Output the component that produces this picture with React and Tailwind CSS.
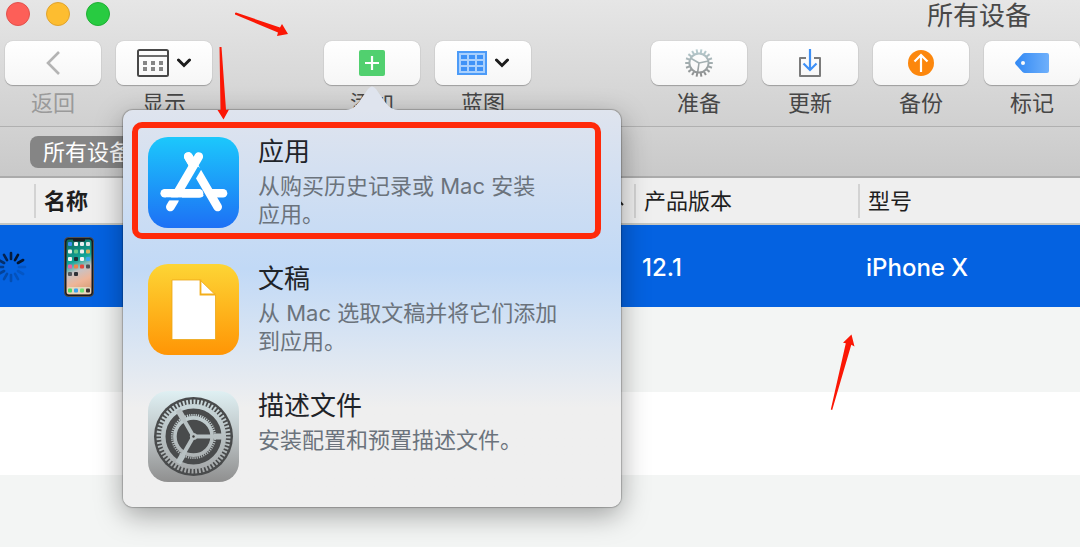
import clsx from 'clsx'

const RED = '#fb1705'

function range(n) {
  return Array.from({ length: n }, (_, i) => i)
}

function Chevron() {
  return (
    <svg width="14" height="10" viewBox="0 0 14 10" fill="none" stroke="#1c1c1c" strokeWidth="3">
      <path d="M1.5 2 L7 7.5 L12.5 2" strokeLinecap="round" />
    </svg>
  )
}

function BackIcon() {
  return (
    <svg width="16" height="24" viewBox="0 0 16 24" fill="none" stroke="#b4b4b4" strokeWidth="2.6">
      <path d="M14 1 L3 12 L14 23" />
    </svg>
  )
}

function CalendarIcon() {
  return (
    <svg width="32" height="28" viewBox="0 0 32 28">
      <rect x="1" y="1" width="30" height="26" rx="1.5" fill="none" stroke="#484848" strokeWidth="2" />
      <path d="M1 7 H31" stroke="#484848" strokeWidth="1.6" />
      {[6, 14, 22].map((x) => (
        <g key={x} fill="#858585">
          <rect x={x} y="12" width="4" height="4" />
          <rect x={x} y="18" width="4" height="4" />
        </g>
      ))}
    </svg>
  )
}

function AddIcon() {
  return (
    <svg width="26" height="26" viewBox="0 0 26 26">
      <rect width="26" height="26" rx="2" fill="#51d06f" />
      <path d="M13 6 V20 M6 13 H20" stroke="#fff" strokeWidth="2.2" />
    </svg>
  )
}

function BlueprintIcon() {
  return (
    <svg width="30" height="24" viewBox="0 0 30 24">
      <rect x="1" y="1" width="28" height="22" fill="#a9d0fd" stroke="#4c9bf8" strokeWidth="2" />
      {[4, 12, 20].map((x) =>
        [4, 10, 16].map((y) => (
          <rect key={`${x}-${y}`} x={x} y={y} width="6" height="4" fill="#3f92f7" />
        )),
      )}
    </svg>
  )
}

function PrepareIcon() {
  return (
    <svg width="28" height="28" viewBox="0 0 28 28" fill="none">
      <defs>
        <linearGradient id="prepare" gradientUnits="userSpaceOnUse" x1="0" y1="0" x2="0" y2="28">
          <stop offset="0" stopColor="#b9cfd3" />
          <stop offset="1" stopColor="#8b8b8b" />
        </linearGradient>
      </defs>
      <g stroke="url(#prepare)">
        <circle cx="14" cy="14" r="9.6" strokeWidth="2" />
        <path d="M14 14 L5.8 9.2 M14 14 L23.4 12 M14 14 L12.6 23.6" strokeWidth="1.6" />
        {range(18).map((i) => {
          const a = (i * Math.PI) / 9
          return (
            <line
              key={i}
              x1={14 + 10 * Math.cos(a)}
              y1={14 + 10 * Math.sin(a)}
              x2={14 + 13.8 * Math.cos(a)}
              y2={14 + 13.8 * Math.sin(a)}
              strokeWidth="2"
            />
          )
        })}
      </g>
    </svg>
  )
}

function UpdateIcon() {
  return (
    <svg width="24" height="28" viewBox="0 0 24 28" fill="none">
      <path d="M8 9 H2 V27 H22 V9 H16" stroke="#7b7b7b" strokeWidth="2" strokeLinejoin="round" />
      <path d="M12 0 V20 M5.5 14.5 L12 21 L18.5 14.5" stroke="#3d8ff5" strokeWidth="2.2" />
    </svg>
  )
}

function BackupIcon() {
  return (
    <svg width="26" height="26" viewBox="0 0 26 26" fill="none">
      <circle cx="13" cy="13" r="13" fill="#fc870d" />
      <path d="M13 22 V5 M6.5 11.5 L13 5 L19.5 11.5" stroke="#fff" strokeWidth="2.2" />
    </svg>
  )
}

function TagIcon() {
  return (
    <svg width="34" height="20" viewBox="0 0 34 20">
      <defs>
        <linearGradient id="tag">
          <stop offset="0" stopColor="#3289f4" />
          <stop offset="1" stopColor="#6fb0fb" />
        </linearGradient>
      </defs>
      <path
        fill="url(#tag)"
        fillRule="evenodd"
        d="M10 0 H32 Q34 0 34 2 V18 Q34 20 32 20 H10 Q8.5 20 7.5 19 L0.5 11.2 Q-0.3 10 0.5 8.8 L7.5 1 Q8.5 0 10 0 Z M8 8 A2 2 0 1 0 8 12 A2 2 0 1 0 8 8 Z"
      />
    </svg>
  )
}

function AppStoreIcon() {
  return (
    <svg className="shrink-0" width="91" height="91" viewBox="0 0 91 91" fill="none">
      <defs>
        <linearGradient id="store" gradientUnits="userSpaceOnUse" x1="0" y1="0" x2="0" y2="91">
          <stop offset="0" stopColor="#1cc8fc" />
          <stop offset="1" stopColor="#1d70f5" />
        </linearGradient>
      </defs>
      <rect width="91" height="91" rx="20" fill="url(#store)" />
      <g stroke="#fff" strokeWidth="8.6" strokeLinecap="round">
        <path d="M16.7 56.3 H52" />
        <path d="M46 30 L69.7 70.5" stroke="url(#store)" strokeWidth="12" />
        <path d="M40.3 19.5 L69.7 70" />
        <path d="M63 56.3 H75" />
        <path d="M49 29 L36 51" stroke="url(#store)" strokeWidth="11" strokeLinecap="butt" />
        <path d="M40.3 19.5 L44.5 26.5" />
        <path d="M50.8 19.5 L30 55" />
        <path d="M30 56.3 H51" />
        <path d="M26.5 63 L22.3 70" />
      </g>
      <path d="M18 62 H34" stroke="url(#store)" strokeWidth="2.8" />
    </svg>
  )
}

function DocumentIcon() {
  return (
    <svg className="shrink-0" width="91" height="91" viewBox="0 0 91 91">
      <defs>
        <linearGradient id="doc" x1="0" y1="0" x2="0" y2="1">
          <stop offset="0" stopColor="#fdd535" />
          <stop offset="1" stopColor="#ff9505" />
        </linearGradient>
      </defs>
      <rect width="91" height="91" rx="20" fill="url(#doc)" />
      <path d="M24 16 H52 L67.5 31 V75.5 H24 Z" fill="#fff" stroke="#eba617" strokeWidth="0.8" />
      <path d="M52.5 15.5 V30.5 H67.5" fill="none" stroke="#f3ae1b" strokeWidth="1.8" />
    </svg>
  )
}

function SettingsIcon() {
  return (
    <svg className="shrink-0" width="91" height="91" viewBox="0 0 91 91" fill="none">
      <defs>
        <linearGradient id="settings" x1="0" y1="0" x2="0" y2="1">
          <stop offset="0" stopColor="#dff0f3" />
          <stop offset="0.5" stopColor="#bcc3c5" />
          <stop offset="1" stopColor="#8f8f8f" />
        </linearGradient>
        <linearGradient id="gear" gradientUnits="userSpaceOnUse" x1="0" y1="6" x2="0" y2="85">
          <stop offset="0" stopColor="#ccdcdf" />
          <stop offset="1" stopColor="#a3a5a6" />
        </linearGradient>
      </defs>
      <rect width="91" height="91" rx="20" fill="url(#settings)" />
      <circle cx="45.5" cy="45.5" r="39.5" fill="#494b4c" />
      <g stroke="url(#gear)">
        <circle cx="45.5" cy="45.5" r="34.5" strokeWidth="5" pathLength="180" strokeDasharray="1.6 1.4" />
        <circle cx="45.5" cy="45.5" r="30.3" strokeWidth="4.6" />
        <circle cx="45.5" cy="45.5" r="21.4" strokeWidth="2.4" pathLength="180" strokeDasharray="1.6 1.4" />
        <circle cx="45.5" cy="45.5" r="18.6" strokeWidth="3.6" />
        {[0, 120, 240].map((deg) => (
          <g key={deg} transform={`rotate(${deg} 45.5 45.5)`}>
            <path d="M45 45.5 H76" strokeWidth="4" />
            <path d="M66 45.5 H76" strokeWidth="6" />
          </g>
        ))}
      </g>
      <circle cx="45.5" cy="45.5" r="3.6" fill="#b8c0c2" />
      <circle cx="45.5" cy="45.5" r="1.2" fill="#3c3c3c" />
    </svg>
  )
}

function Spinner() {
  const shades = [0.9, 1, 1, 0.15, 0.15, 0.2, 0.25, 0.3, 0.4, 0.5, 0.65, 0.8]
  return (
    <svg width="28" height="32" viewBox="5 0 28 32" stroke="#04142e" strokeWidth="2.6" strokeLinecap="round">
      {shades.map((opacity, i) => (
        <line key={i} x1="16" y1="2" x2="16" y2="8" opacity={opacity} transform={`rotate(${i * 30} 16 16)`} />
      ))}
    </svg>
  )
}

const phoneApps = [
  ['#3d8df0', '#f3f3f3', '#e9eef0', '#dde5e5'],
  ['#e9f2ee', '#64c88b', '#f0f0f0', '#d5b260'],
  ['#f4f4f4', '#202d33', '#f4f4f4', '#3aa7ee'],
  ['#ea5fa4', '#f0824a', '#e5473d', '#4b4f54'],
  ['#55575c', '#2e3036'],
]

function PhoneImage() {
  return (
    <svg width="30" height="60" viewBox="0 0 30 60" role="img" aria-label="iPhone X">
      <defs>
        <linearGradient id="screen" x1="0.2" y1="0" x2="0.4" y2="1">
          <stop offset="0" stopColor="#0d6a5e" />
          <stop offset="0.4" stopColor="#12a69a" />
          <stop offset="0.6" stopColor="#c9c2c4" />
          <stop offset="0.8" stopColor="#eeb598" />
          <stop offset="1" stopColor="#d9a079" />
        </linearGradient>
      </defs>
      <rect x="0.5" y="0.5" width="29" height="59" rx="4" fill="#191c20" stroke="#535252" />
      <rect x="2.5" y="2.5" width="25" height="55" rx="2.5" fill="url(#screen)" />
      <path d="M9 2 H21 V3.5 Q21 4.5 20 4.5 H10 Q9 4.5 9 3.5 Z" fill="#191c20" />
      {phoneApps.map((row, y) =>
        row.map((color, x) => (
          <rect key={`${x}-${y}`} x={4 + x * 6} y={5 + y * 7.5} width="4" height="4" rx="1" fill={color} />
        )),
      )}
      <rect x="3" y="50" width="24" height="7" rx="2" fill="#e7d7bd" />
      {['#4cd964', '#3aa2f0', '#6ee075', '#3a3030'].map((color, x) => (
        <rect key={color} x={4 + x * 6} y="51.5" width="4" height="4" rx="1" fill={color} />
      ))}
    </svg>
  )
}

const addOptions = [
  { title: '应用', lines: ['从购买历史记录或 Mac 安装', '应用。'], icon: <AppStoreIcon />, highlighted: true },
  { title: '文稿', lines: ['从 Mac 选取文稿并将它们添加', '到应用。'], icon: <DocumentIcon /> },
  { title: '描述文件', lines: ['安装配置和预置描述文件。'], icon: <SettingsIcon /> },
]

function AddPopover() {
  return (
    <div className="absolute top-[69px] left-1/2 z-10 flex w-[498px] -translate-x-1/2 flex-col gap-2.5 rounded-[10px] bg-linear-to-b from-[#dfe4ee] via-[#c1d9f6] via-40% to-[#efefef] to-75% pt-3 pr-5 pb-3.5 pl-[9px] shadow-[0_0_1px_1px_rgba(0,0,0,0.22),0_8px_28px_rgba(0,0,0,0.35)]">
      <svg className="absolute bottom-full left-1/2 -translate-x-1/2" width="52" height="25" viewBox="0 0 52 25">
        <path
          d="M0 25 C8 24 11 20 15 14 L22 4 Q26 -1 30 4 L37 14 C41 20 44 24 52 25 Z"
          fill="#dfe4ee"
        />
      </svg>
      {addOptions.map((option) => (
        <button
          key={option.title}
          type="button"
          className={clsx(
            'flex h-[117px] items-start gap-[19px] rounded-[10px] border-6 pt-[9px] pl-2.5 text-left',
            option.highlighted ? 'border-[#ff2a0a]' : 'border-transparent',
          )}
        >
          {option.icon}
          <span className="flex flex-col gap-1.5 pt-px whitespace-nowrap">
            <span className="text-[26px] leading-7 text-[#1f2429]">{option.title}</span>
            <span className="text-[22px] leading-7 text-[#6b737c]">
              {option.lines.map((line) => (
                <span key={line} className="block">
                  {line}
                </span>
              ))}
            </span>
          </span>
        </button>
      ))}
    </div>
  )
}

function ToolButton({ label, icon, menu, disabled, children }) {
  return (
    <div className="relative">
      <button
        type="button"
        disabled={disabled}
        className={clsx('flex flex-col items-center gap-1', disabled ? 'text-[#9a9a9a]' : 'text-[#464646]')}
      >
        <span className="flex h-11 w-24 items-center justify-center gap-2 rounded-lg bg-linear-to-b from-white to-[#f6f6f6] shadow-[0_1px_1px_rgba(0,0,0,0.25),0_0_1px_rgba(0,0,0,0.3)]">
          {icon}
          {menu ? <Chevron /> : null}
        </span>
        <span className="text-[22px] leading-7">{label}</span>
      </button>
      {children}
    </div>
  )
}

function Toolbar() {
  return (
    <header className="border-b border-[#b0b0b0] bg-linear-to-b from-[#e6e6e6] to-[#d0d0d0] pt-0.5 pb-[9px]">
      <div className="flex items-start justify-between pr-[49px] pl-1.5">
        <div className="flex gap-4">
          <button type="button" aria-label="关闭" className="size-6 rounded-full border border-[#e2514c] bg-[#fd5f58]" />
          <button type="button" aria-label="最小化" className="size-6 rounded-full border border-[#e0a32e] bg-[#fdbd30]" />
          <button type="button" aria-label="缩放" className="size-6 rounded-full border border-[#1fb034] bg-[#28cb41]" />
        </div>
        <h1 className="text-[26px] leading-7 text-[#484848]">所有设备</h1>
      </div>

      <div className="mt-[11px] flex pl-[5px]">
        <div className="flex gap-[15px]">
          <ToolButton label="返回" icon={<BackIcon />} disabled />
          <ToolButton label="显示" icon={<CalendarIcon />} menu />
        </div>
        <div className="ml-28 flex gap-[15px]">
          <ToolButton label="添加" icon={<AddIcon />}>
            <AddPopover />
          </ToolButton>
          <ToolButton label="蓝图" icon={<BlueprintIcon />} menu />
        </div>
        <div className="ml-auto flex gap-[15px]">
          <ToolButton label="准备" icon={<PrepareIcon />} />
          <ToolButton label="更新" icon={<UpdateIcon />} />
          <ToolButton label="备份" icon={<BackupIcon />} />
          <ToolButton label="标记" icon={<TagIcon />} />
        </div>
      </div>
    </header>
  )
}

function HeaderCell({ children, bold, sorted }) {
  return (
    <th className="h-[47px] border-b-2 border-[#c4c6c2] p-0 text-left">
      <div
        className={clsx(
          'flex h-[34px] items-center justify-between border-l-2 border-[#d3d3d3] pr-2.5 pl-2 text-[22px] leading-7 text-[#1e1e1e]',
          bold ? 'font-bold' : 'font-normal',
        )}
      >
        {children}
        {sorted ? (
          <svg width="16" height="10" viewBox="0 0 16 10" fill="none" stroke="#222" strokeWidth="2">
            <path d="M1 9 L8 1.5 L15 9" />
          </svg>
        ) : null}
      </div>
    </th>
  )
}

function DeviceTable() {
  return (
    <table className="w-full table-fixed border-separate border-spacing-0">
      <colgroup>
        <col className="w-[34px]" />
        <col className="w-[600px]" />
        <col className="w-[224px]" />
        <col />
      </colgroup>
      <thead className="bg-[#efefef]">
        <tr>
          <th className="border-b-2 border-[#c4c6c2] p-0" aria-label="状态" />
          <HeaderCell bold sorted>
            名称
          </HeaderCell>
          <HeaderCell>产品版本</HeaderCell>
          <HeaderCell>型号</HeaderCell>
        </tr>
      </thead>
      <tbody>
        <tr className="bg-[#0462e1] text-2xl font-medium text-white">
          <td className="h-[82px] p-0 pt-0.5">
            <Spinner />
          </td>
          <td className="p-0 pt-0.5 pl-[30px]">
            <PhoneImage />
          </td>
          <td className="p-0 pt-1 pl-2">12.1</td>
          <td className="p-0 pt-1 pl-2">iPhone X</td>
        </tr>
      </tbody>
    </table>
  )
}

function Arrows() {
  return (
    <div className="pointer-events-none" aria-hidden="true">
      <svg className="absolute top-3 left-[234px] z-20" width="56" height="26" viewBox="0 0 56 26" fill={RED}>
        <path d="M1 1 L2 0.5 L46 15.5 L48 12 L54 22 L43 24 L44 20.5 L1 2.5 Z" />
      </svg>
      <svg className="absolute top-[46px] left-[214px] z-20" width="18" height="74" viewBox="0 0 18 74" fill={RED}>
        <path d="M5.5 1 H7.5 L12 64 L15 63.5 L9.5 73.5 L3.5 64 L6.5 64 Z" />
      </svg>
      <svg className="absolute top-[334px] left-[829px] z-20" width="28" height="78" viewBox="0 0 28 78" fill={RED}>
        <path d="M22.5 0.5 L25.5 12.5 L22.3 10.8 L3.2 76 L1.8 75.5 L16.8 9.2 L14 8.8 Z" />
      </svg>
    </div>
  )
}

export default function App() {
  return (
    <div className="relative flex min-h-screen flex-col overflow-hidden bg-white font-['Inter','Noto_Sans_CJK_SC',sans-serif]">
      <Toolbar />
      <nav className="flex h-[51px] items-center border-b-2 border-[#ababab] bg-linear-to-b from-[#d2d2d2] to-[#c9c9c9] pl-[30px]">
        <button type="button" className="h-8 rounded-lg bg-[#858585] px-[13px] text-[22px] leading-7 text-white">
          所有设备
        </button>
      </nav>
      <DeviceTable />
      <div className="h-[85px] bg-[#f3f5f4]" />
      <div className="h-[83px] bg-white" />
      <div className="min-h-[72px] flex-1 bg-[#f3f5f4]" />
      <Arrows />
    </div>
  )
}
